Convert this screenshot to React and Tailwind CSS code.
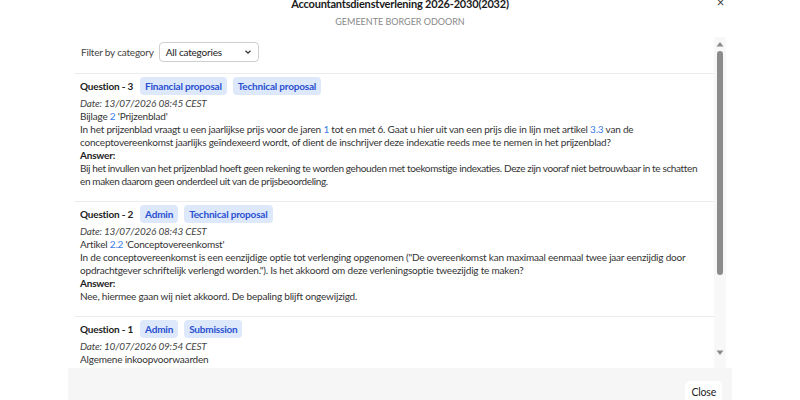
import React from "react";

function Badge({ children }) {
  return (
    <span className="inline-flex items-center h-[18px] px-[5px] rounded-[4px] bg-[#dde8fb] text-[#2a50d0] font-bold text-[10px]">
      {children}
    </span>
  );
}

function Link({ children }) {
  return <span className="text-[#3b7be8]">{children}</span>;
}

function Question({ n, badges, date, ref1, q, a, aClass = "" }) {
  return (
    <div className="border-t border-[#ececec] pl-[5px] pt-[2px] pb-[13px]">
      <div className="flex items-center gap-[6px] h-[20px]">
        <span className="font-bold text-[#222] mr-[1px]">Question - {n}</span>
        {badges.map((b) => (
          <Badge key={b}>{b}</Badge>
        ))}
      </div>
      <div className="italic text-[#444] mt-[1px]">{date}</div>
      <div>{ref1}</div>
      {q && <div>{q}</div>}
      {a && (
        <>
          <div className="font-bold text-[#222]">Answer:</div>
          <div className={aClass}>{a}</div>
        </>
      )}
    </div>
  );
}

export default function App() {
  return (
    <div
      className="w-[800px] h-[400px] bg-white relative overflow-hidden text-[#333] text-[10px] leading-[13px] tracking-[-0.2px]"
      style={{ fontFamily: 'Lato, "Open Sans", sans-serif' }}
    >
      <div className="h-[37px] flex flex-col items-center">
        <div className="font-bold text-[11px] leading-[14px] text-[#1a1a1a] -mt-[3px]">
          Accountantsdienstverlening 2026-2030(2032)
        </div>
        <div className="text-[9px] leading-[12px] text-[#888] mt-[5px] tracking-[0px]">GEMEENTE BORGER ODOORN</div>
      </div>
      <div className="absolute right-[76px] top-[-4px] text-[13px] text-[#333]">×</div>

      <div className="mx-[68px] flex h-[331px]">
        <div className="flex-1 pl-[7px] overflow-hidden">
          <div className="flex items-center h-[30px] pl-[6px] gap-[5px] mb-[6px]">
            <span className="text-[#444]">Filter by category</span>
            <div className="w-[100px] h-[20px] border border-[#cfcfcf] rounded-[4px] flex items-center justify-between pl-[6px] pr-[6px]">
              <span className="text-[#222]">All categories</span>
              <svg width="8" height="8" viewBox="0 0 8 8">
                <path d="M1.5 2.8 L4 5.2 L6.5 2.8" fill="none" stroke="#333" strokeWidth="1.3" />
              </svg>
            </div>
          </div>
          <Question
            n="3"
            badges={["Financial proposal", "Technical proposal"]}
            date="Date: 13/07/2026 08:45 CEST"
            ref1={
              <>
                Bijlage <Link>2</Link> 'Prijzenblad'
              </>
            }
            q={
              <>
                In het prijzenblad vraagt u een jaarlijkse prijs voor de jaren <Link>1</Link> tot en met 6. Gaat u hier
                uit van een prijs die in lijn met artikel <Link>3.3</Link> van de conceptovereenkomst jaarlijks
                geïndexeerd wordt, of dient de inschrijver deze indexatie reeds mee te nemen in het prijzenblad?
              </>
            }
            aClass="tracking-[-0.36px] pr-[9px]"
            a="Bij het invullen van het prijzenblad hoeft geen rekening te worden gehouden met toekomstige indexaties. Deze zijn vooraf niet betrouwbaar in te schatten en maken daarom geen onderdeel uit van de prijsbeoordeling."
          />
          <Question
            n="2"
            badges={["Admin", "Technical proposal"]}
            date="Date: 13/07/2026 08:43 CEST"
            ref1={
              <>
                Artikel <Link>2.2</Link> 'Conceptovereenkomst'
              </>
            }
            q='In de conceptovereenkomst is een eenzijdige optie tot verlenging opgenomen ("De overeenkomst kan maximaal eenmaal twee jaar eenzijdig door opdrachtgever schriftelijk verlengd worden."). Is het akkoord om deze verleningsoptie tweezijdig te maken?'
            a="Nee, hiermee gaan wij niet akkoord. De bepaling blijft ongewijzigd."
          />
          <Question
            n="1"
            badges={["Admin", "Submission"]}
            date="Date: 10/07/2026 09:54 CEST"
            ref1="Algemene inkoopvoorwaarden"
          />
        </div>
        <div className="w-[12px] bg-[#f8f8f8] flex flex-col items-center">
          <svg width="8" height="6" viewBox="0 0 8 6" className="mt-[4px]">
            <path d="M0.5 5.5 L4 1 L7.5 5.5 Z" fill="#8a8a8a" />
          </svg>
          <div className="w-[6px] h-[224px] bg-[#8c8c8c] rounded-[3px] mt-[4px]" />
          <div className="flex-1" />
          <svg width="8" height="6" viewBox="0 0 8 6" className="mb-[12px]">
            <path d="M0.5 0.5 L4 5 L7.5 0.5 Z" fill="#8a8a8a" />
          </svg>
        </div>
        <div className="w-[6px]" />
      </div>
      <div className="mx-[68px] h-[32px] bg-[#f6f6f6] flex items-start justify-end pr-[10px] pt-[13px]">
        <div className="bg-white rounded-[5px] px-[6px] h-[22px] flex items-center text-[10.5px] text-[#222]">Close</div>
      </div>
    </div>
  );
}
